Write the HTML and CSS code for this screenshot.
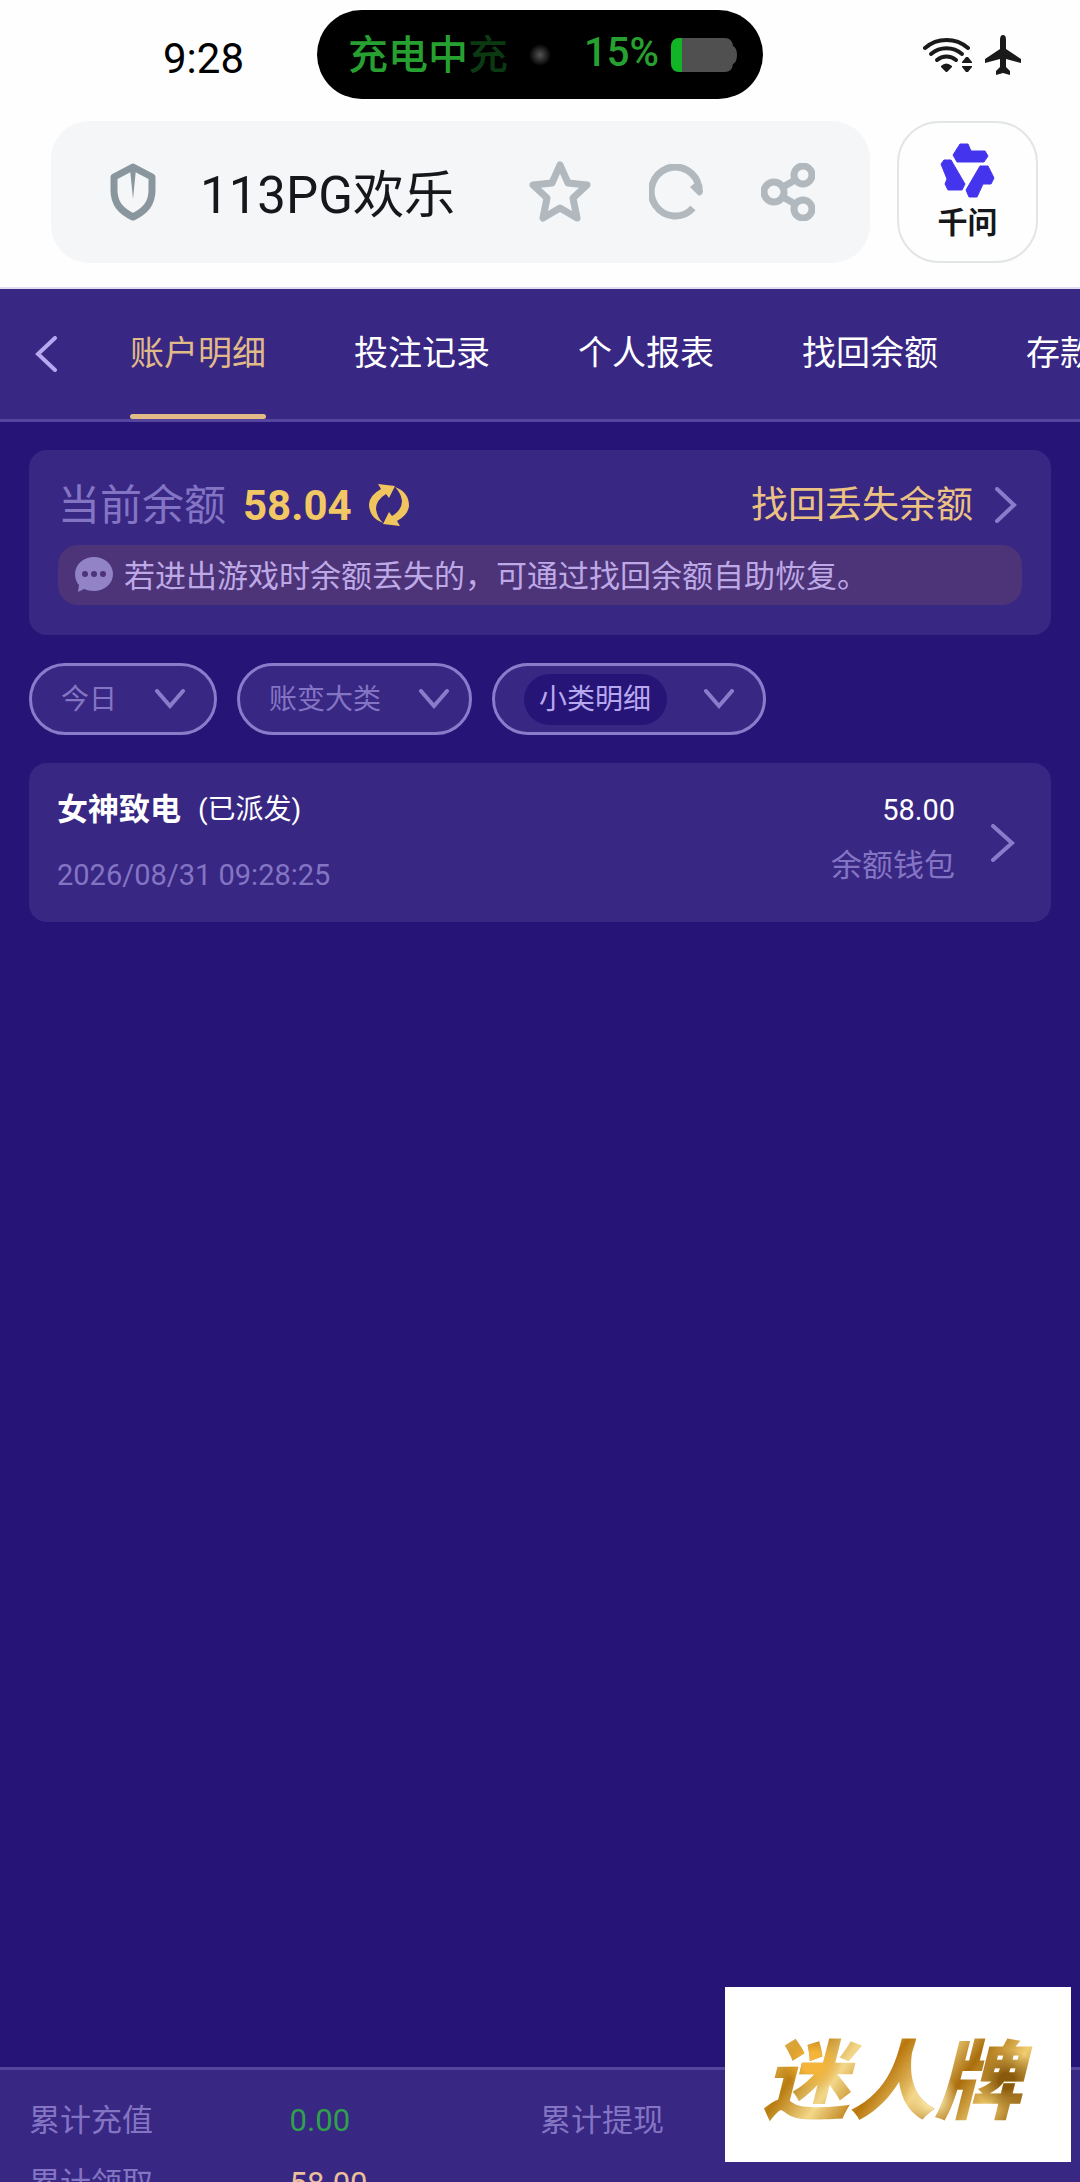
FILE: index.html
```html
<!DOCTYPE html>
<html lang="zh-CN">
  <head>
    <meta charset="utf-8" />
    <meta name="viewport" content="width=device-width, initial-scale=1.0" />
    <title>账户明细</title>
    <link rel="stylesheet" href="styles.css">
  </head>
  <body>
    <div class="status-bar">
      <time class="clock">9:28</time>
      <div class="island">
        <span class="charging">充电中</span>
        <span class="charging-next">充</span>
        <i class="camera"></i>
        <span class="percent">15%</span>
        <svg class="battery" width="66" height="34" viewBox="0 0 66 34">
          <path fill="#505050" d="M9 0H54Q61 0 62 8Q66 10 66 17T62 26Q61 34 54 34H9Q0 34 0 25V9Q0 0 9 0Z"/>
          <path fill="#12b526" d="M11 0V34H9Q0 34 0 25V9Q0 0 9 0Z"/>
        </svg>
      </div>
      <div class="signals">
        <svg width="50" height="36" viewBox="0 0 50 36" fill="none" stroke="#1a1a1a" stroke-width="4" stroke-linecap="round">
          <path d="M2 11A33 33 0 0 1 45 11"/>
          <path d="M8 17A24 24 0 0 1 39 17"/>
          <path d="M14 23A15 15 0 0 1 33 23"/>
          <path fill="#1a1a1a" stroke="none" d="M18 29Q23 24 29 29V30L24 35H23L18 30ZM39 25L43 20H45L49 25V26H39ZM39 29H49V30L45 35H43L39 30Z"/>
        </svg>
        <svg width="36" height="40" viewBox="0 0 36 40" fill="#1a1a1a">
          <path d="M18 0Q21 0 21 5V14L36 24V28L21 24V32L25 36V40L18 38L11 40V36L15 32V24L0 28V24L15 14V5Q15 0 18 0Z"/>
        </svg>
      </div>
    </div>

    <div class="browser-bar">
      <div class="address">
        <svg width="46" height="58" viewBox="0 0 46 58">
          <path fill="none" stroke="#89969d" stroke-width="7" stroke-linejoin="round" d="M23 4L42 14V27C42 41 35 48 23 54C11 48 4 41 4 27V14Z"/>
          <path fill="#89969d" d="M20 6H26L23 36Z"/>
        </svg>
        <span class="site">113PG欢乐</span>
        <button type="button" aria-label="收藏">
          <svg width="62" height="62" viewBox="0 0 62 62" fill="none" stroke="#b1b9be" stroke-width="7" stroke-linejoin="round">
            <path d="M31 4L39 22L58 24L44 37L48 57L31 47L14 57L18 37L4 24L23 22Z"/>
          </svg>
        </button>
        <button type="button" aria-label="刷新">
          <svg width="54" height="56" viewBox="0 0 54 56">
            <path fill="none" stroke="#b1b9be" stroke-width="7" d="M44 44A24 24.500 0 1 1 50 24"/>
            <path fill="#b1b9be" d="M53 20L54 28Q52 33 49 31L41 23L46 19Z"/>
          </svg>
        </button>
        <button type="button" aria-label="分享">
          <svg width="54" height="58" viewBox="0 0 54 58" fill="none" stroke="#b1b9be" stroke-width="7">
            <circle cx="13" cy="29" r="10"/>
            <circle cx="42" cy="12" r="9"/>
            <circle cx="42" cy="46" r="9"/>
            <path d="M22 24L34 17M22 34L34 41"/>
          </svg>
        </button>
      </div>
      <button type="button" class="assistant">
        <svg width="56" height="56" viewBox="0 0 56 56" fill="#4534ee" stroke="#4534ee" stroke-linejoin="round">
          <path d="M13 12L20 1H28L31 8H45L48 13L44 19H17Z"/>
          <path d="M1 21L4 17H11L25 41L22 47H8L5 41L7 36Z"/>
          <path d="M40 23H48L54 35L51 41H43L37 54H29L26 47Z"/>
        </svg>
        千问
      </button>
    </div>

    <div class="app">
      <nav class="tabs">
        <a class="back" href="#" aria-label="返回">
          <svg width="22" height="36" viewBox="0 0 22 36"><path d="M20 2L3 18L20 34"/></svg>
        </a>
        <a class="tab active" href="#">账户明细</a>
        <a class="tab" href="#">投注记录</a>
        <a class="tab" href="#">个人报表</a>
        <a class="tab" href="#">找回余额</a>
        <a class="tab" href="#">存款记录</a>
      </nav>

      <main>
        <section class="card balance">
          <div class="balance-row">
            <span class="label">当前余额</span>
            <strong class="amount">58.04</strong>
            <button type="button" aria-label="刷新余额">
              <svg width="40" height="42" viewBox="0 0 40 42" fill="#f0c55e">
                <path id="arrow" d="M9 0L26 2L20 14L17 10Q7 16 7 25Q8 33 14 39Q0 34 0 20Q1 11 12 5Z"/>
                <use href="#arrow" transform="rotate(180 20 21)"/>
              </svg>
            </button>
            <a class="recover" href="#">
              <span>找回丢失余额</span>
              <svg class="chevron" width="22" height="36" viewBox="0 0 22 36"><path d="M2 2L19 18L2 34"/></svg>
            </a>
          </div>
          <p class="notice">
            <svg width="38" height="36" viewBox="0 0 38 36">
              <path fill="#9183c5" d="M19 0C29 0 38 7 38 17S29 34 19 34Q13 34 9 32L3 35L4 28Q0 24 0 17C0 7 9 0 19 0Z"/>
              <g fill="#4d3378"><circle cx="10" cy="17" r="3"/><circle cx="19" cy="17" r="3"/><circle cx="28" cy="17" r="3"/></g>
            </svg>
            <span>若进出游戏时余额丢失的，可通过找回余额自助恢复。</span>
          </p>
        </section>

        <form class="filters">
          <label class="filter">
            <select aria-label="日期"><option>今日</option><option>昨日</option></select>
            <svg width="30" height="20" viewBox="0 0 30 20"><path d="M2 2L15 17L28 2"/></svg>
          </label>
          <label class="filter category">
            <select aria-label="账变大类"><option>账变大类</option></select>
            <svg width="30" height="20" viewBox="0 0 30 20"><path d="M2 2L15 17L28 2"/></svg>
          </label>
          <label class="filter">
            <select class="pill" aria-label="小类明细"><option>小类明细</option></select>
            <svg width="30" height="20" viewBox="0 0 30 20"><path d="M2 2L15 17L28 2"/></svg>
          </label>
        </form>

        <a class="card record" href="#">
          <div class="record-main">
            <div class="record-title"><b>女神致电</b><span>(已派发)</span></div>
            <time>2026/08/31 09:28:25</time>
          </div>
          <div class="record-side">
            <span class="sum">58.00</span>
            <span class="wallet">余额钱包</span>
          </div>
          <svg class="chevron" width="24" height="38" viewBox="0 0 24 38"><path d="M2 2L21 19L2 36"/></svg>
        </a>
      </main>

      <footer>
        <dl class="totals">
          <div><dt>累计充值</dt><dd class="green">0.00</dd></div>
          <div><dt>累计提现</dt><dd></dd></div>
          <div><dt>累计领取</dt><dd class="gold">58.00</dd></div>
        </dl>
      </footer>
    </div>

    <div class="stamp"><span>迷人牌</span></div>
  </body>
</html>
```
FILE: styles.css
```css
* {
  box-sizing: border-box;
}
body {
  margin: 0;
  height: 100vh;
  display: flex;
  flex-direction: column;
  overflow: hidden;
  position: relative;
  background: #fefefe;
  color: #fff;
  font-family: Roboto, "Noto Sans CJK SC", sans-serif;
}
a {
  color: inherit;
  text-decoration: none;
}
button {
  padding: 0;
  border: 0;
  background: none;
  font-family: inherit;
}
svg {
  display: block;
  flex: none;
}

/* phone status bar */
.status-bar {
  height: 109px;
  display: grid;
  grid-template-columns: 1fr 446px 1fr;
  align-items: center;
}
.clock {
  padding: 7px 0 0 163px;
  font-size: 42px;
  color: #000;
}
.island {
  height: 89px;
  padding: 0 26px 0 31px;
  border-radius: 45px;
  background: #000;
  display: flex;
  align-items: center;
  font-size: 40px;
  font-weight: 500;
  color: #27a032;
}
.island span {
  padding-bottom: 5px;
}
.charging-next {
  color: #0b3a12;
}
.camera {
  width: 24px;
  height: 24px;
  margin: 0 auto 0 20px;
  border-radius: 50%;
  background: radial-gradient(#555, #000 65%);
}
.percent {
  margin-right: 12px;
}
.signals {
  justify-self: end;
  padding-right: 59px;
  display: flex;
  align-items: center;
  gap: 12px;
}

/* browser address bar */
.browser-bar {
  height: 178px;
  padding: 12px 42px 24px 51px;
  display: flex;
  gap: 27px;
}
.address {
  flex: 1;
  padding: 0 55px 0 59px;
  border-radius: 38px;
  background: #f4f6f8;
  display: flex;
  align-items: center;
  gap: 58px;
}
.site {
  flex: 1;
  margin-left: -14px;
  padding-bottom: 3px;
  font-size: 51px;
  color: #15171a;
}
.assistant {
  width: 141px;
  border: 2px solid #e2e5e6;
  border-radius: 42px;
  display: flex;
  flex-direction: column;
  align-items: center;
  justify-content: center;
  gap: 6px;
  font-size: 30px;
  line-height: 36px;
  font-weight: 700;
  color: #15171a;
}

/* page */
.app {
  flex: 1;
  min-height: 0;
  display: flex;
  flex-direction: column;
  border-top: 2px solid #e0def0;
  background: #261577;
}
.tabs {
  flex: none;
  height: 133px;
  padding-left: 35px;
  border-bottom: 3px solid #56459f;
  background: #382783;
  display: flex;
  gap: 88px;
  overflow: hidden;
}
.back {
  width: 22px;
  margin-right: -15px;
  display: flex;
  align-items: center;
}
.back path,
.chevron path,
.filter path {
  fill: none;
  stroke: #8b7ccb;
  stroke-width: 4;
  stroke-linecap: round;
}
.back path {
  stroke: #b7a8ef;
}
.tab {
  flex: none;
  font-size: 34px;
  line-height: 128px;
}
.tab.active {
  color: #e0ba88;
  position: relative;
}
.tab.active::after {
  content: "";
  position: absolute;
  left: 0;
  right: 0;
  bottom: 0;
  height: 5px;
  border-radius: 3px;
  background: #e0bb87;
}
main {
  flex: 1;
  padding: 28px 29px;
  display: flex;
  flex-direction: column;
  gap: 28px;
}
.card {
  border-radius: 18px;
  background: #382783;
}
.balance {
  padding: 26px 29px 30px;
}
.balance-row {
  height: 58px;
  margin-bottom: 11px;
  display: flex;
  align-items: center;
}
.label {
  padding-bottom: 7px;
  font-size: 42px;
  color: #8475c4;
}
.amount {
  margin: 0 17px;
  font-size: 42px;
  color: #f2c864;
}
.recover {
  margin-left: auto;
  padding-right: 5px;
  display: flex;
  align-items: center;
  gap: 22px;
  font-size: 37px;
  color: #ecc283;
}
.recover span {
  padding-bottom: 7px;
}
.notice {
  margin: 0;
  height: 60px;
  padding: 0 17px;
  border-radius: 20px;
  background: #4d3378;
  display: flex;
  align-items: center;
  gap: 11px;
  font-size: 31px;
  color: #bda9e6;
}
.notice span {
  padding-bottom: 4px;
}
.filters {
  display: flex;
  gap: 20px;
}
.filter {
  height: 72px;
  padding: 0 29px;
  border: 3px solid #8b7ccb;
  border-radius: 36px;
  background: #382783;
  display: flex;
  align-items: center;
  gap: 37px;
}
.filter.category {
  padding-right: 20px;
}
.filter select {
  appearance: none;
  height: 51px;
  padding: 0;
  border: 0;
  background: none;
  font-family: inherit;
  font-size: 28px;
  color: #8475c4;
}
.filter .pill {
  padding: 0 15px;
  border-radius: 26px;
  background: #261577;
  color: #b7a8ef;
}
.record {
  padding: 24px 36px 24px 28px;
  display: flex;
  align-items: center;
}
.record-main {
  flex: 1;
}
.record-title {
  margin-bottom: 20px;
  display: flex;
  align-items: center;
  gap: 17px;
  font-size: 28px;
  line-height: 46px;
}
.record-title b {
  font-size: 31px;
}
.record time {
  display: block;
  font-size: 29px;
  line-height: 45px;
  color: #8475c4;
}
.record-side {
  align-self: flex-start;
  margin-right: 36px;
  display: flex;
  flex-direction: column;
  gap: 10px;
  text-align: right;
  line-height: 46px;
}
.sum {
  font-size: 29px;
}
.wallet {
  font-size: 31px;
  color: #8475c4;
}

footer {
  flex: none;
  height: 115px;
  padding: 19px 29px 0;
  border-top: 3px solid #56459f;
  background: #382783;
  overflow: hidden;
}
.totals {
  margin: 0;
  display: grid;
  grid-template-columns: 1fr 1fr;
  font-size: 31px;
  line-height: 63px;
}
.totals div {
  display: flex;
}
.totals dt {
  width: 51%;
  color: #8475c4;
}
.totals dd {
  margin: 0;
}
.totals .green {
  color: #2fa04c;
}
.totals .gold {
  color: #ecc09a;
}

.stamp {
  position: absolute;
  right: 9px;
  bottom: 20px;
  width: 346px;
  height: 175px;
  background: #fff;
  display: flex;
  align-items: center;
  justify-content: center;
  font-size: 86px;
  font-style: italic;
  font-weight: 900;
}
.stamp span {
  padding: 0 20px 0 8px;
  background:
    radial-gradient(circle at 20% 40%, #f5b53a 0 4%, transparent 12%),
    radial-gradient(circle at 62% 70%, #f8e3a0 0 4%, transparent 14%),
    radial-gradient(circle at 88% 55%, #8a5a0c 0 3%, transparent 12%),
    linear-gradient(125deg, #a8720f 0%, #e9bd55 12%, #b97c10 22%, #f3d88a 34%, #b9770c 46%, #f0cf7c 58%, #a96d0c 68%, #f1cd70 80%, #9a640f 90%, #d9a33a 100%);
  background-clip: text;
  -webkit-background-clip: text;
  color: transparent;
}
```
